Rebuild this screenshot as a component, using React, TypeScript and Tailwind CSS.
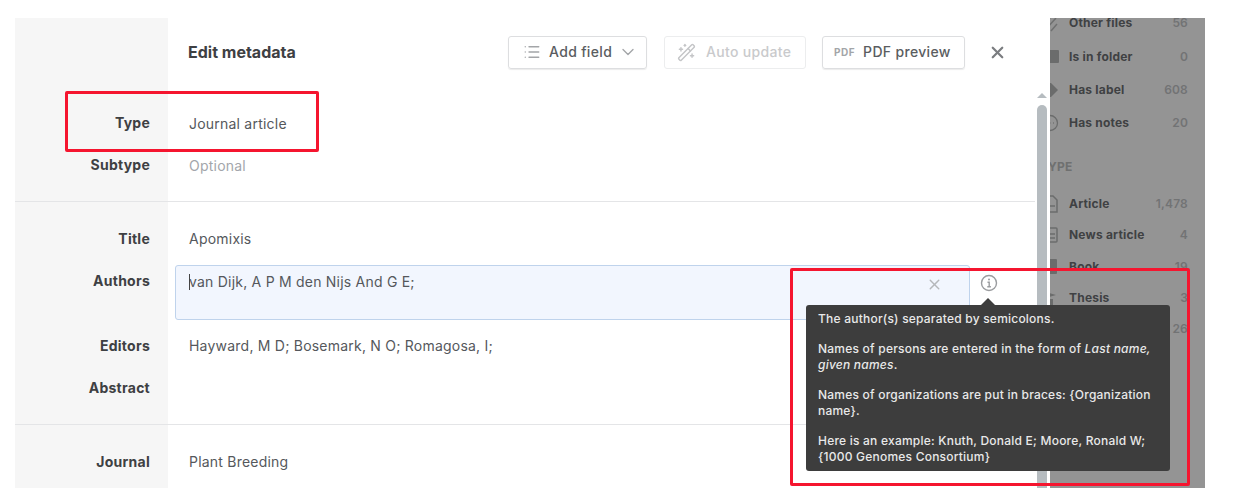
import React from 'react';
import { ChevronDown, List, WandSparkles, X } from 'lucide-react';

const Label: React.FC<{ children: React.ReactNode; low?: boolean }> = ({ children, low }) => (
  <div className={`w-[153px] shrink-0 bg-[#f6f6f6] pr-[18px] text-right text-sm font-bold tracking-[0.25px] text-[#3e4043] ${low ? 'leading-[44px]' : 'leading-[42px]'}`}>{children}</div>
);

const Row: React.FC<{ label: string; value?: string; muted?: boolean; low?: boolean }> = ({ label, value, muted, low }) => (
  <div className="flex h-[42px] pr-[15px]">
    <Label low={low}>{label}</Label>
    <div className={`pl-[21px] text-sm leading-[44px] tracking-[0.22px] ${muted ? 'text-[#a3a6ab]' : 'text-[#55585c]'}`}>{value}</div>
  </div>
);

const Spacer: React.FC<{ h: string; line?: boolean }> = ({ h, line }) => (
  <div className={`flex ${h} ${line ? 'border-b border-[#e4e5e7]' : ''} mr-[15px]`}>
    <div className="w-[153px] bg-[#f6f6f6]"></div>
  </div>
);

const sideItems = [
  { name: 'Other files', count: '56', h: 'h-[34px]', icon: <path d="M12 1 3 12M15 5l-11 12M16 11l-6 7" fill="none" stroke="#6f7070" strokeWidth="1.5" /> },
  { name: 'Is in folder', count: '0', h: 'h-[33px]', icon: <rect x="1" y="3" width="17" height="13" rx="1" fill="#6b6c6c" /> },
  { name: 'Has label', count: '608', h: 'h-[33px]', icon: <path d="M1 3h9l7 7-7 7H1z" fill="#6b6c6c" /> },
  { name: 'Has notes', count: '20', h: 'h-[33px]', icon: <g fill="none" stroke="#6b6c6c" strokeWidth="1.3"><circle cx="9" cy="10" r="7.5" /><path d="M5 10h.8M8.6 10h.8M12 10h.8" /></g> },
];

const typeItems = [
  { name: 'Article', count: '1,478', h: 'h-[31px]', icon: <g fill="none" stroke="#6b6c6c" strokeWidth="1.5"><path d="M3 2h9l4 4v12H3z" /><path d="M4 12h10" /></g> },
  { name: 'News article', count: '4', h: 'h-[32px]', icon: <g fill="none" stroke="#6b6c6c" strokeWidth="1.5"><rect x="2" y="3" width="14" height="14" rx="1" /><path d="M4 9h10M4 13h10" /></g> },
  { name: 'Book', count: '19', h: 'h-[31px]', icon: <rect x="2" y="2" width="14" height="15" rx="1" fill="#6b6c6c" /> },
  { name: 'Thesis', count: '3', h: 'h-[31px]', icon: <path d="M1 3l14 4-14 4zM3 11h9v6H3z" fill="#6b6c6c" /> },
  { name: '', count: '26', h: 'h-[31px]', icon: null },
];

const SideRow: React.FC<{ item: (typeof sideItems)[number] }> = ({ item }) => (
  <div className={`flex items-center ${item.h} pr-[17px]`}>
    <svg viewBox="0 0 18 20" className="-ml-[9px] mr-[10px] h-5 w-[18px] shrink-0">{item.icon}</svg>
    <span className="flex-1 text-xs font-bold tracking-[0.2px] text-[#3f4143]">{item.name}</span>
    <span className="text-xs font-semibold tracking-[0.2px] text-[#727374]">{item.count}</span>
  </div>
);

const App: React.FC = () => {
  return (
    <div className="relative flex h-[488px] w-[1240px] overflow-hidden bg-white pl-[15px] pt-[18px] font-[Inter,sans-serif]">
      {/* dialog */}
      <div className="relative w-[1035px] shrink-0 bg-white">
        <div className="flex h-[84px] pr-[15px]">
          <div className="w-[153px] shrink-0 bg-[#f6f6f6]"></div>
          <div className="flex flex-1 items-center pb-[16px] pl-[20px]">
            <h2 className="flex-1 text-base font-bold text-[#3e4043]">Edit metadata</h2>
            <button className="flex h-[33px] w-[139px] items-center rounded-[3px] border border-[#dddee0] pl-[14px] text-sm font-medium tracking-[0.33px] text-[#5a5d61] shadow-[0_1px_1px_rgba(0,0,0,0.08)]">
              <List size={18} strokeWidth={1.8} className="mr-[8px] text-[#a3a5a8]" />
              Add field
              <ChevronDown size={20} strokeWidth={1.6} className="ml-[6px] text-[#a3a5a8]" />
            </button>
            <button className="ml-[17px] flex h-[33px] w-[142px] items-center rounded-[3px] border border-[#ecedee] pl-[12px] text-sm font-medium tracking-[0.33px] text-[#c9cacc]">
              <WandSparkles size={19} strokeWidth={1.8} className="mr-[10px] text-[#c4c5c7]" />
              Auto update
            </button>
            <button className="ml-[16px] flex h-[33px] w-[143px] items-center rounded-[3px] border border-[#dddee0] pl-[11px] text-sm font-medium tracking-[0.33px] text-[#5a5d61] shadow-[0_1px_1px_rgba(0,0,0,0.08)]">
              <span className="mr-[8px] text-[10px] font-bold tracking-[0.5px] text-[#a3a5a8]">PDF</span>
              PDF preview
            </button>
            <X size={19} strokeWidth={2.8} className="ml-[23px] mr-[28px] text-[#7b7d80]" />
          </div>
        </div>

        <Row label="Type" value="Journal article" />
        <Row label="Subtype" value="Optional" muted />
        <Spacer h="h-[16px]" line />
        <Spacer h="h-[15px]" />
        <Row label="Title" value="Apomixis" low />

        <div className="flex h-[65px] pr-[15px]">
          <Label low>Authors</Label>
          <div className="ml-[7px] mt-[6px] flex h-[55px] w-[795px] items-start justify-between rounded-[3px] border border-[#bfd3ec] bg-[#f2f6fe] pl-[13px] pr-[26px] pt-[5px] text-sm tracking-[0.22px] text-[#55585c]">
            <span className="leading-[20px]">
              <span className="-mr-px inline-block h-[16px] w-px translate-y-[3px] bg-[#444]"></span>
              van Dijk, A P M den Nijs And G E;
            </span>
            <X size={17} strokeWidth={2} className="mt-[5px] text-[#b5b7ba]" />
          </div>
        </div>

        <Row label="Editors" value="Hayward, M D; Bosemark, N O; Romagosa, I;" low />
        <Row label="Abstract" low />
        <Spacer h="h-[17px]" line />
        <Spacer h="h-[15px]" />
        <Row label="Journal" value="Plant Breeding" low />
        <Spacer h="h-[9px]" />

        {/* scrollbar */}
        <div className="absolute left-[1022px] top-[75px] h-0 w-0 border-x-[5px] border-b-[5px] border-x-transparent border-b-[#b6bcc0]"></div>
        <div className="absolute bottom-0 left-[1022px] top-[87px] w-[10px] rounded-t-[5px] bg-[#b6bcc0]"></div>
      </div>

      {/* sidebar behind the overlay */}
      <div className="w-[155px] shrink-0 self-stretch overflow-hidden bg-[#949494]">
        <div className="-mt-[12px]">
          {sideItems.map(item => <SideRow key={item.name} item={item} />)}
          <div className="h-[49px] pt-[11px] text-xs font-bold leading-[34px] tracking-[0.2px] text-[#6f7070]">
            <span className="-ml-[2px] block">YPE</span>
          </div>
          {typeItems.map(item => <SideRow key={item.count} item={item} />)}
        </div>
      </div>

      {/* info icon + tooltip */}
      <svg viewBox="0 0 18 18" className="absolute left-[980px] top-[274px] h-[18px] w-[18px]" fill="none" stroke="#9a9c9f">
        <circle cx="9" cy="9" r="7.5" strokeWidth="1.4" />
        <path d="M7.5 8.2H9.2V12.6M7.3 12.8h3.6" strokeWidth="1.4" />
        <circle cx="9" cy="5.6" r="1" fill="#9a9c9f" stroke="none" />
      </svg>
      <div className="absolute left-[981px] top-[298px] h-0 w-0 border-x-[7px] border-b-[7px] border-x-transparent border-b-[#3d3d3d]"></div>
      <div className="absolute left-[806px] top-[305px] h-[166px] w-[364px] space-y-[13px] rounded-[3px] bg-[#3d3d3d] py-[6px] pl-[12px] pr-[12px] text-xs font-medium leading-[16.5px] tracking-[0.22px] text-[#e9e9e9]">
        <p>The author(s) separated by semicolons.</p>
        <p>Names of persons are entered in the form of <em>Last name, given names</em>.</p>
        <p>Names of organizations are put in braces: {'{'}Organization name{'}'}.</p>
        <p>Here is an example: Knuth, Donald E; Moore, Ronald W; {'{'}1000 Genomes Consortium{'}'}</p>
      </div>

      {/* annotation boxes */}
      <div className="absolute left-[65px] top-[91px] h-[61px] w-[254px] rounded-[2px] border-[3px] border-[#f5152f]"></div>
      <div className="absolute left-[790px] top-[268px] h-[218px] w-[400px] rounded-[2px] border-[3px] border-[#f5152f]"></div>
    </div>
  );
};

export default App;
